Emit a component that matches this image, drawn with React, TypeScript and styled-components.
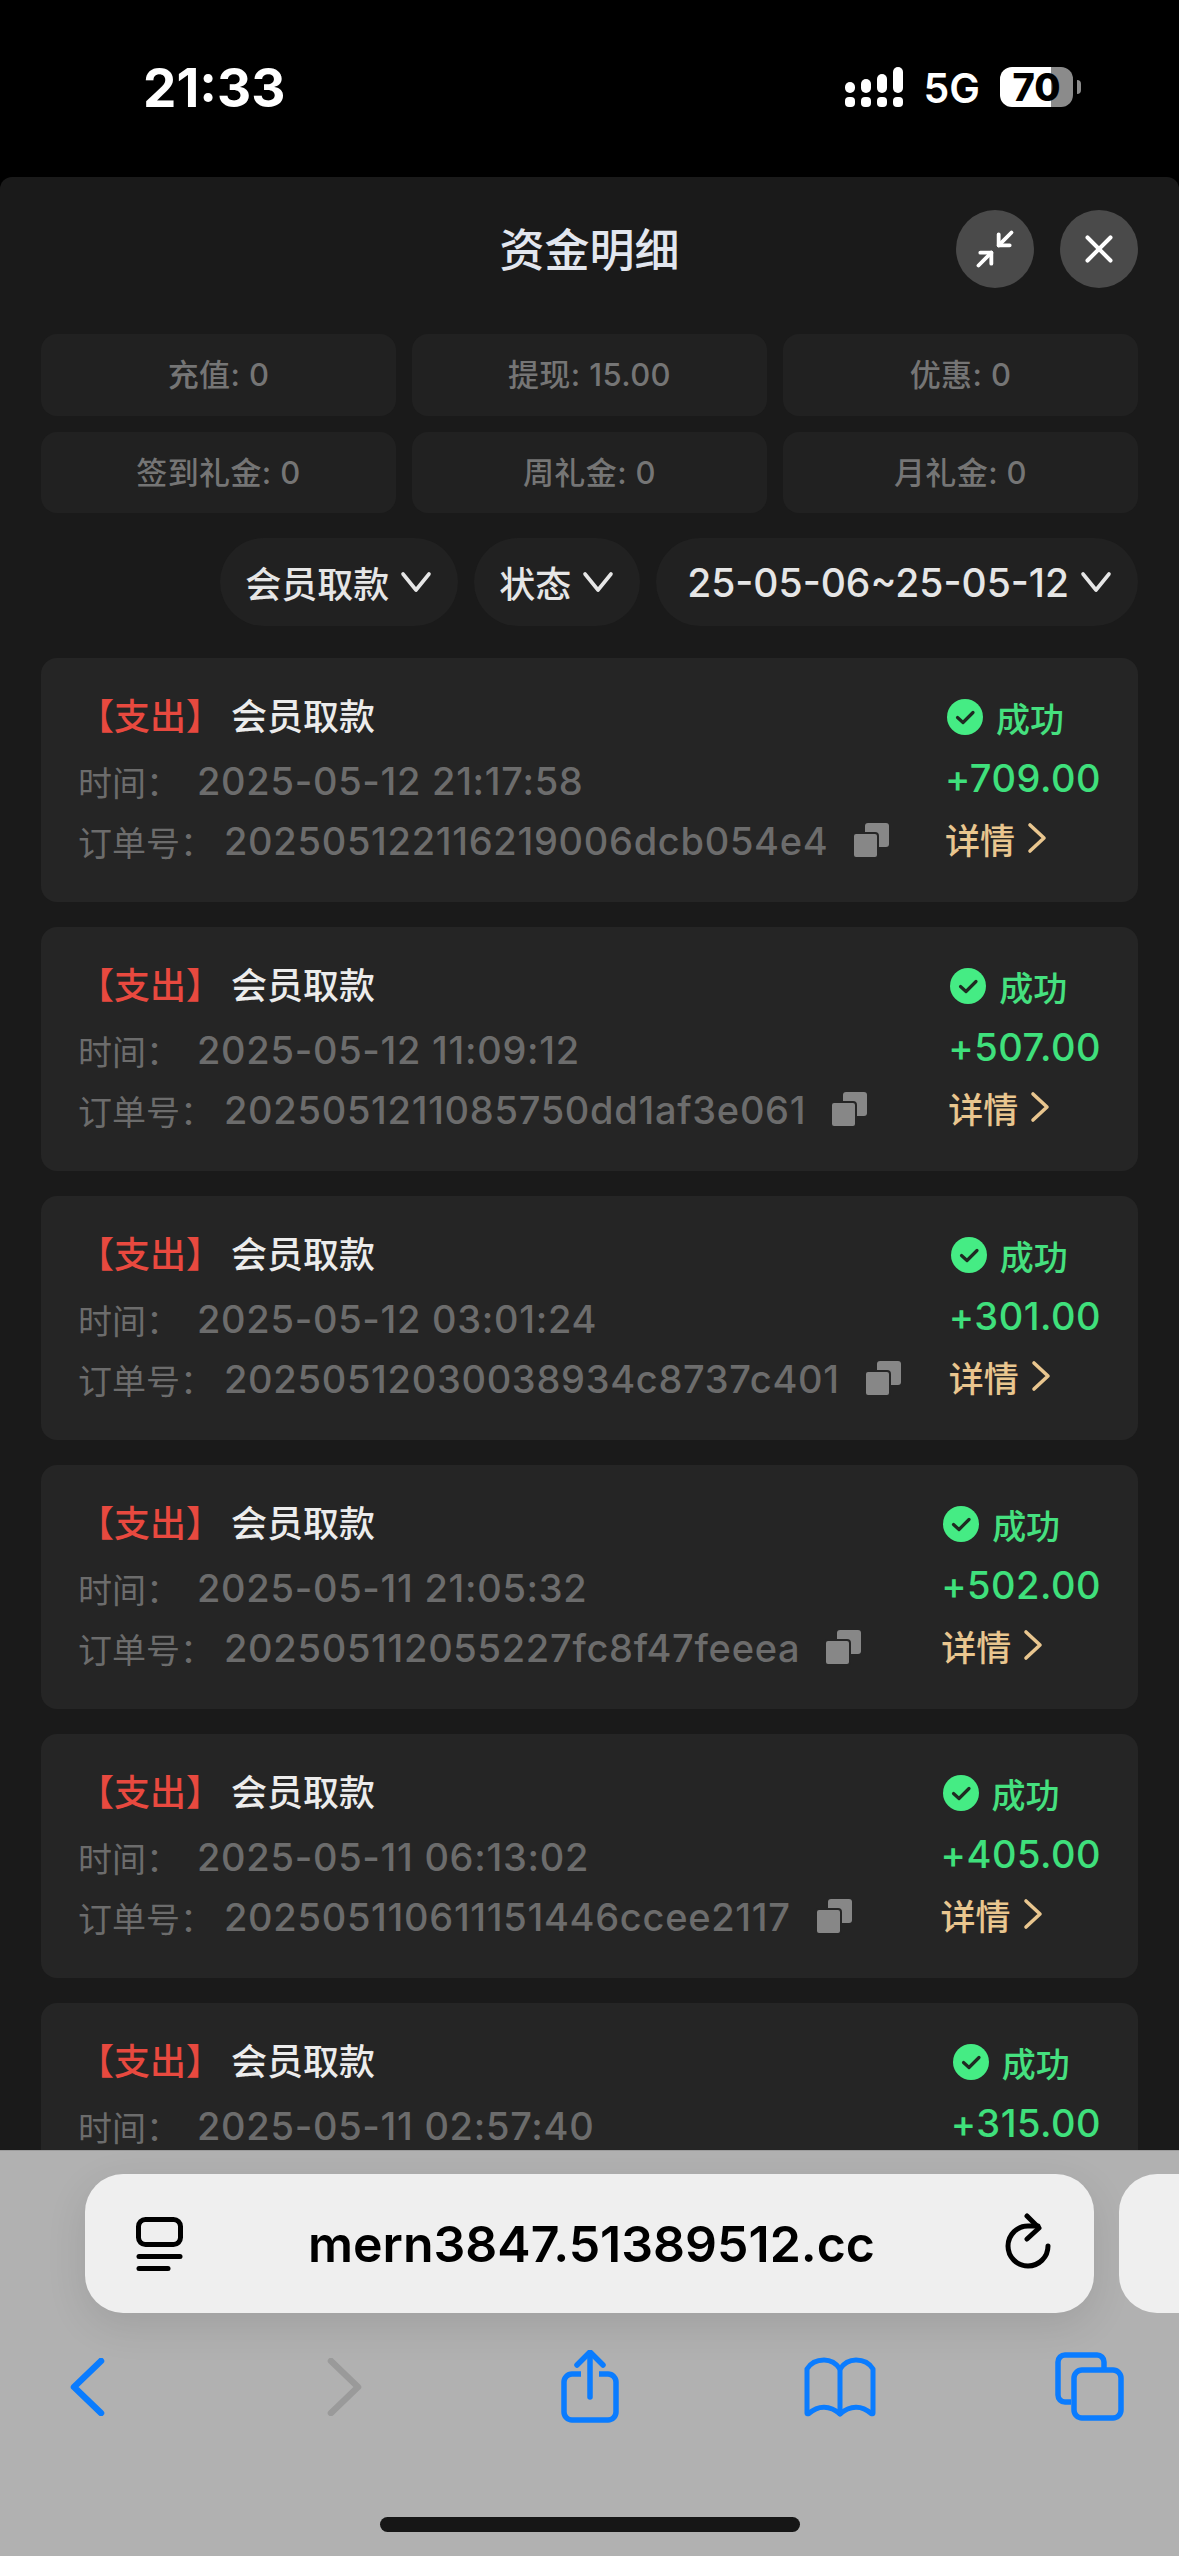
import React from "react";
import styled, { createGlobalStyle } from "styled-components";
import { Minimize2, X } from "lucide-react";

const GlobalStyle = createGlobalStyle`
  html, body {
    margin: 0;
    padding: 0;
    background: #000;
  }
  * {
    box-sizing: border-box;
  }
  body {
    font-family: Inter, "Noto Sans CJK SC", sans-serif;
    -webkit-font-smoothing: antialiased;
  }
`;

const Page = styled.div`
  width: 1179px;
  height: 2556px;
  display: flex;
  flex-direction: column;
  overflow: hidden;
`;

/* status bar */
const StatusBar = styled.div`
  height: 177px;
  flex: none;
  background: #000;
  color: #fff;
  display: flex;
  justify-content: space-between;
  padding: 58px 106px 0 143px;
`;

const Clock = styled.div`
  font-size: 53px;
  line-height: 60px;
  font-weight: 700;
`;

const StatusRight = styled.div`
  display: flex;
  align-items: flex-start;
  padding-top: 9px;
`;

const NetworkLabel = styled.div`
  font-size: 41px;
  line-height: 42px;
  font-weight: 600;
  margin: 0 20px 0 21px;
`;

const Battery = styled.div`
  position: relative;
  width: 73px;
  height: 40px;
  border-radius: 12px;
  background: linear-gradient(to right, #fff 70%, #8b8b8b 70%);
  color: #000;
  font-size: 38px;
  line-height: 40px;
  font-weight: 800;
  text-align: center;

  &::after {
    content: "";
    position: absolute;
    right: -8px;
    top: 13px;
    width: 4px;
    height: 14px;
    border-radius: 0 4px 4px 0;
    background: #8b8b8b;
  }
`;

/* sheet */
const Sheet = styled.div`
  flex: 1;
  min-height: 0;
  background: #1a1a1a;
  border-radius: 12px 12px 0 0;
  padding: 33px 41px 0;
  display: flex;
  flex-direction: column;
  overflow: hidden;
`;

const Header = styled.div`
  display: grid;
  grid-template-columns: 1fr auto 1fr;
  align-items: center;
  height: 78px;
  flex: none;
`;

const Title = styled.div`
  grid-column: 2;
  font-size: 45px;
  line-height: 60px;
  font-weight: 500;
  color: #e2e6ee;
  padding-top: 4px;
`;

const HeaderActions = styled.div`
  justify-self: end;
  display: flex;
  gap: 26px;
`;

const RoundButton = styled.button`
  width: 78px;
  height: 78px;
  border: none;
  padding: 0;
  border-radius: 50%;
  background: #4a4a4a;
  color: #fff;
  display: flex;
  align-items: center;
  justify-content: center;
`;

const StatsGrid = styled.div`
  display: grid;
  grid-template-columns: repeat(3, 1fr);
  gap: 16px;
  margin-top: 46px;
  flex: none;
`;

const StatCell = styled.div`
  height: 81.5px;
  border-radius: 16px;
  background: #212121;
  color: #757575;
  font-size: 31px;
  font-weight: 500;
  letter-spacing: 0.4px;
  line-height: 81px;
  text-align: center;
`;

const FilterRow = styled.div`
  display: flex;
  justify-content: flex-end;
  gap: 16px;
  margin-top: 25px;
  flex: none;
`;

const FilterPill = styled.div`
  height: 88px;
  border-radius: 44px;
  background: #212121;
  color: #e6e6e6;
  font-size: 36px;
  font-weight: 500;
  display: flex;
  align-items: center;
  gap: 11px;
  padding: 0 26px 0 25px;
`;

const DateRange = styled.span`
  font-size: 39px;
  margin-left: 6px;
`;

const ChevronGlyph = styled.svg`
  flex: none;
`;

const CardList = styled.div`
  display: flex;
  flex-direction: column;
  gap: 25px;
  margin-top: 32px;
`;

const Card = styled.div`
  flex: none;
  height: 244px;
  border-radius: 16px;
  background: #252525;
  display: flex;
  justify-content: space-between;
  padding: 28px 37px 0 37px;
`;

const CardLeft = styled.div`
  display: flex;
  flex-direction: column;
`;

const CardTitle = styled.div`
  height: 56px;
  display: flex;
  align-items: center;
  gap: 9px;
  font-size: 36px;
  font-weight: 500;
  color: #ececec;
  margin-bottom: 9px;
`;

const Tag = styled.span`
  color: #e8493f;
`;

const InfoRow = styled.div`
  height: 60px;
  display: flex;
  align-items: center;
  font-size: 34px;
  color: #6c6c6c;
  white-space: nowrap;
`;

const InfoLabel = styled.span<{ $width: number }>`
  width: ${(p) => p.$width}px;
  flex: none;
`;

const InfoValue = styled.span`
  font-size: 38px;
  font-weight: 500;
  letter-spacing: 0.7px;
`;

const CopyGlyph = styled.svg`
  margin-left: 25px;
  flex: none;
`;

const CardRight = styled.div`
  display: flex;
  flex-direction: column;
  align-items: flex-start;
  padding-top: 3px;
`;

const StatusLine = styled.div`
  height: 56px;
  display: flex;
  align-items: center;
  gap: 13px;
  font-size: 34px;
  font-weight: 500;
  color: #45e07f;
  padding-left: 2px;
`;

const Amount = styled.div`
  height: 60px;
  display: flex;
  align-items: center;
  font-size: 38px;
  font-weight: 500;
  letter-spacing: 0.5px;
  color: #3fe07c;
  margin-top: 3px;
`;

const DetailLink = styled.div`
  height: 60px;
  display: flex;
  align-items: center;
  gap: 12px;
  font-size: 35px;
  font-weight: 500;
  color: #e9c68f;
`;

/* browser chrome */
const BrowserBar = styled.div`
  flex: none;
  height: 406px;
  background: #b1b1b1;
  border-top: 1px solid #9c9c9c;
  position: relative;
  overflow: hidden;
  padding-top: 23px;
`;

const AddressRow = styled.div`
  display: flex;
  gap: 25px;
  padding-left: 85px;
`;

const AddressPill = styled.div`
  flex: none;
  width: 1009px;
  height: 139px;
  border-radius: 38px;
  background: #efefef;
  box-shadow: 0 12px 40px rgba(0, 0, 0, 0.1);
  display: flex;
  align-items: center;
  justify-content: space-between;
  padding: 0 42px 0 51px;
`;

const NextPill = styled.div`
  flex: none;
  width: 120px;
  height: 139px;
  border-radius: 38px;
  background: #efefef;
`;

const AddressText = styled.div`
  font-size: 50px;
  font-weight: 600;
  color: #000;
  margin-right: 4px;
`;

const Toolbar = styled.div`
  display: grid;
  grid-template-columns: repeat(5, 250px);
  justify-content: center;
  justify-items: center;
  align-items: center;
  margin-top: 36px;
  height: 76px;
`;

const HomeIndicator = styled.div`
  position: absolute;
  left: 380px;
  bottom: 24px;
  width: 420px;
  height: 15px;
  border-radius: 8px;
  background: #161616;
`;

// the last entry runs under the browser bar, so only its first two lines are on screen
const rows = [
  { time: "2025-05-12 21:17:58", order: "202505122116219006dcb054e4", amount: "+709.00" },
  { time: "2025-05-12 11:09:12", order: "2025051211085750dd1af3e061", amount: "+507.00" },
  { time: "2025-05-12 03:01:24", order: "20250512030038934c8737c401", amount: "+301.00" },
  { time: "2025-05-11 21:05:32", order: "202505112055227fc8f47feeea", amount: "+502.00" },
  { time: "2025-05-11 06:13:02", order: "202505110611151446ccee2117", amount: "+405.00" },
  { time: "2025-05-11 02:57:40", amount: "+315.00" },
];

const stats = ["充值: 0", "提现: 15.00", "优惠: 0", "签到礼金: 0", "周礼金: 0", "月礼金: 0"];

const SignalIcon = () => (
  <svg width="58" height="40" viewBox="0 0 58 40" fill="#fff">
    <rect x="0" y="15" width="10" height="11" rx="5" />
    <rect x="16" y="12" width="10" height="14" rx="5" />
    <rect x="32" y="7" width="10" height="19" rx="5" />
    <rect x="48" y="0" width="10" height="26" rx="5" />
    <rect x="0" y="30" width="10" height="10" rx="4" />
    <rect x="16" y="30" width="10" height="10" rx="4" />
    <rect x="32" y="30" width="10" height="10" rx="4" />
    <rect x="48" y="30" width="10" height="10" rx="4" />
  </svg>
);

const DownChevron = () => (
  <ChevronGlyph width="32" height="22" viewBox="0 0 32 22" fill="none" stroke="#e6e6e6" strokeWidth="3.6" strokeLinecap="round" strokeLinejoin="round">
    <path d="M3 3l13 16L29 3" />
  </ChevronGlyph>
);

const RightChevron = () => (
  <ChevronGlyph width="20" height="32" viewBox="0 0 20 32" fill="none" stroke="#e9c68f" strokeWidth="3.6" strokeLinecap="round" strokeLinejoin="round">
    <path d="M3 3l14 13L3 29" />
  </ChevronGlyph>
);

const CopyIcon = () => (
  <CopyGlyph width="36" height="36" viewBox="0 0 36 36" fill="#878787">
    <rect x="12" y="0" width="24" height="24" rx="3" />
    <rect x="0" y="10" width="25" height="25" rx="3" stroke="#252525" strokeWidth="2" />
  </CopyGlyph>
);

const CheckBadge = () => (
  <svg width="36" height="36" viewBox="0 0 36 36">
    <circle cx="18" cy="18" r="18" fill="#45ec84" />
    <path d="M10.5 18.5l5.5 5 10-10" fill="none" stroke="#1f2a22" strokeWidth="3.2" strokeLinecap="round" strokeLinejoin="round" />
  </svg>
);

const ReaderIcon = () => (
  <svg width="47" height="58" viewBox="0 0 47 58" fill="none" stroke="#000" strokeLinecap="round">
    <rect x="2.5" y="4.5" width="42" height="25" rx="7" strokeWidth="5" />
    <path d="M3 41.5h41" strokeWidth="5" />
    <path d="M3 53.5h29" strokeWidth="5" />
  </svg>
);

const ReloadIcon = () => (
  <svg width="48" height="62" viewBox="0 0 48 62" fill="none" stroke="#000" strokeWidth="5" strokeLinecap="round" strokeLinejoin="round">
    <path d="M44 33A20 20 0 1 1 24 13h10" />
    <path d="M23 3l12 12-12 11" />
  </svg>
);

const NavChevron = ({ color, forward }: { color: string; forward?: boolean }) => (
  <svg width="48" height="58" viewBox="0 0 48 58" fill="none" stroke={color} strokeWidth="6.5" strokeLinecap="round" strokeLinejoin="round">
    <path d={forward ? "M15 3l27 26-27 26" : "M35 3L8 29l27 26"} />
  </svg>
);

const ShareIcon = () => (
  <svg width="58" height="74" viewBox="0 0 58 74" fill="none" stroke="#0a7cff" strokeWidth="5.5" strokeLinejoin="round">
    <path d="M20 24h-9a8 8 0 0 0-8 8v30a8 8 0 0 0 8 8h36a8 8 0 0 0 8-8V32a8 8 0 0 0-8-8h-9" />
    <path d="M29 47V3" strokeLinecap="round" />
    <path d="M16 15L29 2l13 13" strokeLinecap="round" />
  </svg>
);

const BookIcon = () => (
  <svg width="72" height="60" viewBox="0 0 72 60" fill="none" stroke="#0a7cff" strokeWidth="5" strokeLinecap="round" strokeLinejoin="round">
    <path d="M36 12C32 6 26 3 20 3 12 3 6 7 3 12v44c0 1 1 1 2 .5C14 48 26 48 36 57c10-9 22-9 31-.5 1 .5 2 .5 2-.5V12C66 7 60 3 52 3c-6 0-12 3-16 9z" />
    <path d="M36 12v45" />
  </svg>
);

const TabsIcon = () => (
  <svg width="70" height="70" viewBox="0 0 70 70" fill="none" stroke="#0a7cff" strokeWidth="5.5" strokeLinejoin="round">
    <path d="M16 50h-6a7 7 0 0 1-7-7V10a7 7 0 0 1 7-7h32a7 7 0 0 1 7 7v8" />
    <rect x="19" y="18" width="47" height="48" rx="8" />
  </svg>
);

export default function App() {
  return (
    <Page>
      <GlobalStyle />
      <StatusBar>
        <Clock>21:33</Clock>
        <StatusRight>
          <SignalIcon />
          <NetworkLabel>5G</NetworkLabel>
          <Battery>70</Battery>
        </StatusRight>
      </StatusBar>

      <Sheet>
        <Header>
          <Title>资金明细</Title>
          <HeaderActions>
            <RoundButton>
              <Minimize2 size={44} strokeWidth={2.1} />
            </RoundButton>
            <RoundButton>
              <X size={46} strokeWidth={2.1} />
            </RoundButton>
          </HeaderActions>
        </Header>

        <StatsGrid>
          {stats.map((s) => (
            <StatCell key={s}>{s}</StatCell>
          ))}
        </StatsGrid>

        <FilterRow>
          <FilterPill>
            会员取款
            <DownChevron />
          </FilterPill>
          <FilterPill>
            状态
            <DownChevron />
          </FilterPill>
          <FilterPill>
            <DateRange>25-05-06~25-05-12</DateRange>
            <DownChevron />
          </FilterPill>
        </FilterRow>

        <CardList>
          {rows.map((r) => (
            <Card key={r.time}>
              <CardLeft>
                <CardTitle>
                  <Tag>【支出】</Tag>
                  会员取款
                </CardTitle>
                <InfoRow>
                  <InfoLabel $width={119}>时间：</InfoLabel>
                  <InfoValue>{r.time}</InfoValue>
                </InfoRow>
                {r.order && (
                  <InfoRow>
                    <InfoLabel $width={146}>订单号：</InfoLabel>
                    <InfoValue>{r.order}</InfoValue>
                    <CopyIcon />
                  </InfoRow>
                )}
              </CardLeft>
              <CardRight>
                <StatusLine>
                  <CheckBadge />
                  成功
                </StatusLine>
                <Amount>{r.amount}</Amount>
                {r.order && (
                  <DetailLink>
                    详情
                    <RightChevron />
                  </DetailLink>
                )}
              </CardRight>
            </Card>
          ))}
        </CardList>
      </Sheet>

      <BrowserBar>
        <AddressRow>
          <AddressPill>
            <ReaderIcon />
            <AddressText>mern3847.51389512.cc</AddressText>
            <ReloadIcon />
          </AddressPill>
          <NextPill />
        </AddressRow>
        <Toolbar>
          <NavChevron color="#0a7cff" />
          <NavChevron color="#9a9a9a" forward />
          <ShareIcon />
          <BookIcon />
          <TabsIcon />
        </Toolbar>
        <HomeIndicator />
      </BrowserBar>
    </Page>
  );
}
